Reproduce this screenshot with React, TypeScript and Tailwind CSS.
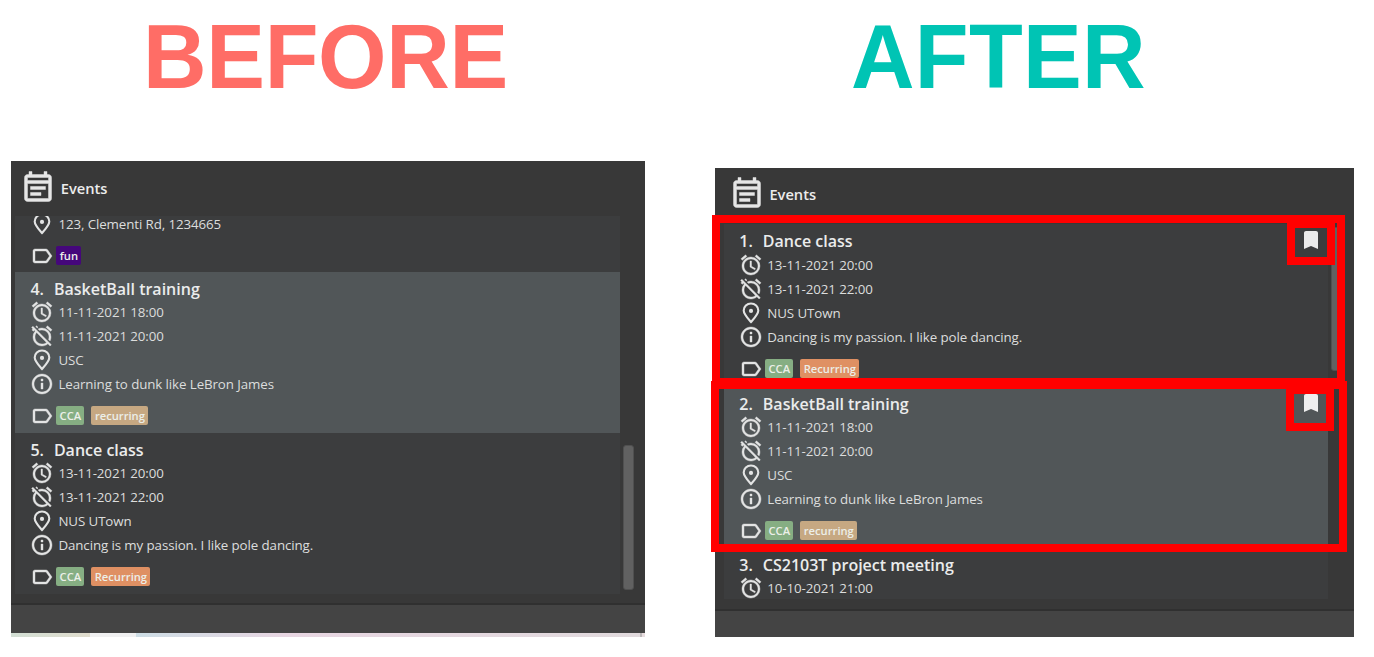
import React from "react";
import {
  MdAlarm,
  MdAlarmOff,
  MdBookmark,
  MdLabelOutline,
  MdOutlineEventNote,
  MdOutlineInfo,
} from "react-icons/md";

type Tag = { label: string; box: string };

const CCA: Tag = { label: "CCA", box: "w-[28px] bg-[#86ae83]" };
const RECURRING: Tag = { label: "Recurring", box: "w-[59px] bg-[#df9063]" };
const RECURRING_LOWER: Tag = { label: "recurring", box: "w-[57px] bg-[#c6a882]" };
const FUN: Tag = { label: "fun", box: "w-[25px] bg-[#45077b]" };

// Thickens the glyph outlines slightly; the icons' empty bounding path stays invisible.
const ICON = "size-6 shrink-0 stroke-[0.4px] [&>path[fill=none]]:stroke-none";

function Pin() {
  return (
    <svg viewBox="0 0 24 24" className="size-6" fill="none">
      <path
        d="M12 21C9.2 17.8 4.7 13 4.7 9.4a7.3 6.9 0 0 1 14.6 0c0 3.6-4.5 8.4-7.3 11.6z"
        stroke="currentColor"
        strokeWidth="2.1"
      />
      <circle cx="12" cy="9.9" r="2.1" fill="currentColor" />
    </svg>
  );
}

function Row({ icon, children }: { icon: React.ReactNode; children: React.ReactNode }) {
  return (
    <div className="flex h-6 items-center">
      <span className="flex w-7 shrink-0 text-[#e3e4e4]">{icon}</span>
      <span className="text-[13.33px] leading-6 tracking-[-0.1px] whitespace-nowrap text-[#dcdddd]">{children}</span>
    </div>
  );
}

function Tags({ tags }: { tags: Tag[] }) {
  return (
    <div className="mt-[10px] flex h-[19px] items-center">
      <span className="-ml-[0.3px] flex w-[26.3px] shrink-0 text-[#e3e4e4]">
        <MdLabelOutline className={ICON} />
      </span>
      <div className="flex gap-[7px]">
        {tags.map((t) => (
          <span
            key={t.label}
            className={`${t.box} h-[19px] rounded-[2px] text-center text-[11.2px] leading-[19px] font-semibold text-[#ecefe9]`}
          >
            {t.label}
          </span>
        ))}
      </div>
    </div>
  );
}

type EventProps = {
  index: number;
  title: string;
  start: string;
  end?: string;
  place?: string;
  note?: string;
  tags?: Tag[];
  box: string;
  titleBox?: string;
};

function EventCard({ index, title, start, end, place, note, tags, box, titleBox = "h-[22px]" }: EventProps) {
  return (
    <div className={`${box} shrink-0`}>
      <div
        className={`${titleBox} flex items-start text-[16px] leading-[22px] font-semibold whitespace-nowrap text-[#ebecec]`}
      >
        <span className="w-[23.5px] shrink-0">{index}.</span>
        <span>{title}</span>
      </div>
      <Row icon={<MdAlarm className={ICON} />}>{start}</Row>
      {end && <Row icon={<MdAlarmOff className={ICON} />}>{end}</Row>}
      {place && <Row icon={<Pin />}>{place}</Row>}
      {note && <Row icon={<MdOutlineInfo className={ICON} />}>{note}</Row>}
      {tags && <Tags tags={tags} />}
    </div>
  );
}

function Header({ box, label }: { box: string; label: string }) {
  return (
    <div className={`${box} flex shrink-0 items-start`}>
      <MdOutlineEventNote className="size-9 stroke-[0.3px] text-[#e6e6e6] [&>path[fill=none]]:stroke-none" />
      <span className={`${label} ml-[4.4px] text-[14.67px] font-semibold text-[#ececec]`}>Events</span>
    </div>
  );
}

export default function App() {
  return (
    <div className="relative h-[657px] w-[1374px] overflow-hidden bg-white font-['Open_Sans',sans-serif]">
      <div className="flex items-start">
        <section className="flex w-[704px] shrink-0 flex-col">
          <h1 className="h-[161px] pt-[5px] pl-[143px] font-['Liberation_Sans',Arial,sans-serif] text-[88px] leading-[100px] font-bold text-[#ff6d66]">
            <span className="block origin-[0_0] scale-y-[1.04] tracking-[-0.3px]">BEFORE</span>
          </h1>
          <div className="ml-[11px] flex h-[476px] w-[634px] flex-col bg-[#383838]">
            <Header box="h-[55px] pt-[9px] pl-[9.4px]" label="leading-[36px]" />
            <div className="flex h-[378px] shrink-0 pl-1">
              <div className="flex w-[605px] flex-col overflow-hidden bg-[#3c3d3e]">
                <div className="flex h-14 shrink-0 flex-col justify-end pb-[7px] pl-[15.4px]">
                  <Row icon={<Pin />}>123, Clementi Rd, 1234665</Row>
                  <Tags tags={[FUN]} />
                </div>
                <EventCard
                  index={4}
                  title="BasketBall training"
                  start="11-11-2021 18:00"
                  end="11-11-2021 20:00"
                  place="USC"
                  note="Learning to dunk like LeBron James"
                  tags={[CCA, RECURRING_LOWER]}
                  box="h-[161px] bg-[#515658] pt-[6px] pl-[15.4px]"
                />
                <EventCard
                  index={5}
                  title="Dance class"
                  start="13-11-2021 20:00"
                  end="13-11-2021 22:00"
                  place="NUS UTown"
                  note="Dancing is my passion. I like pole dancing."
                  tags={[CCA, RECURRING]}
                  box="h-[161px] pt-[6px] pl-[15.4px]"
                />
              </div>
              <div className="mt-[229px] ml-[3px] h-[145px] w-[11px] rounded-[3px] border border-[#505050] bg-[#616161]" />
            </div>
            <div className="mt-[9px] h-[30px] shrink-0 border-t-2 border-[#303030] bg-[#444444]" />
            <div className="flex h-1 shrink-0">
              <div className="w-[79px] bg-linear-to-r from-[#d3dfd5] to-[#e0dccd]" />
              <div className="w-[46px] bg-[#f0f0f1]" />
              <div className="w-[504px] bg-linear-to-r from-[#cddde5] via-[#e8d6e2] via-30% to-[#e1dadd]" />
              <div className="w-[2px] bg-[#bcb8b9]" />
              <div className="grow bg-[#e7dcde]" />
            </div>
          </div>
        </section>

        <section className="flex w-[670px] shrink-0 flex-col">
          <h1 className="h-[168px] pt-[5px] pl-[147px] font-['Liberation_Sans',Arial,sans-serif] text-[88px] leading-[100px] font-bold text-[#00c4b4]">
            <span className="block origin-[0_0] scale-y-[1.04] tracking-[0.3px]">AFTER</span>
          </h1>
          <div className="ml-[11px] flex h-[469px] w-[639px] flex-col bg-[#383838]">
            <Header box="h-[56px] pt-2 pl-[14px]" label="leading-[37px]" />
            <div className="flex h-[375px] shrink-0 pl-[9px]">
              <div className="flex w-[604px] flex-col overflow-hidden bg-[#3c3d3e]">
                <EventCard
                  index={1}
                  title="Dance class"
                  start="13-11-2021 20:00"
                  end="13-11-2021 22:00"
                  place="NUS UTown"
                  note="Dancing is my passion. I like pole dancing."
                  tags={[CCA, RECURRING]}
                  box="h-[163px] pt-[6px] pl-[15.3px]"
                  titleBox="h-[23px]"
                />
                <EventCard
                  index={2}
                  title="BasketBall training"
                  start="11-11-2021 18:00"
                  end="11-11-2021 20:00"
                  place="USC"
                  note="Learning to dunk like LeBron James"
                  tags={[CCA, RECURRING_LOWER]}
                  box="h-[161px] bg-[#515658] pt-[6px] pl-[15.3px]"
                />
                <EventCard
                  index={3}
                  title="CS2103T project meeting"
                  start="10-10-2021 21:00"
                  box="h-[161px] pt-[6px] pl-[15.3px]"
                />
              </div>
              <div className="mt-[3px] ml-[3px] h-[144px] w-[11px] rounded-[3px] border border-[#505050] bg-[#616161]" />
            </div>
            <div className="mt-[10px] h-[28px] shrink-0 border-t-2 border-[#303030] bg-[#444444]" />
          </div>
        </section>
      </div>

      <MdBookmark className="absolute top-[228px] left-[1299px] size-6 text-[#ebebeb]" />
      <MdBookmark className="absolute top-[391px] left-[1299px] size-6 text-[#efefef]" />
      <div className="absolute top-[215px] left-[712px] h-[171px] w-[633px] border-8 border-[#ff0000]" />
      <div className="absolute top-[381px] left-[711px] h-[171px] w-[636px] border-8 border-[#ff0000]" />
      <div className="absolute top-[220px] left-[1287px] h-[45px] w-[48px] border-8 border-[#ff0000]" />
      <div className="absolute top-[386px] left-[1286px] h-[45px] w-[48px] border-8 border-[#ff0000]" />
    </div>
  );
}
